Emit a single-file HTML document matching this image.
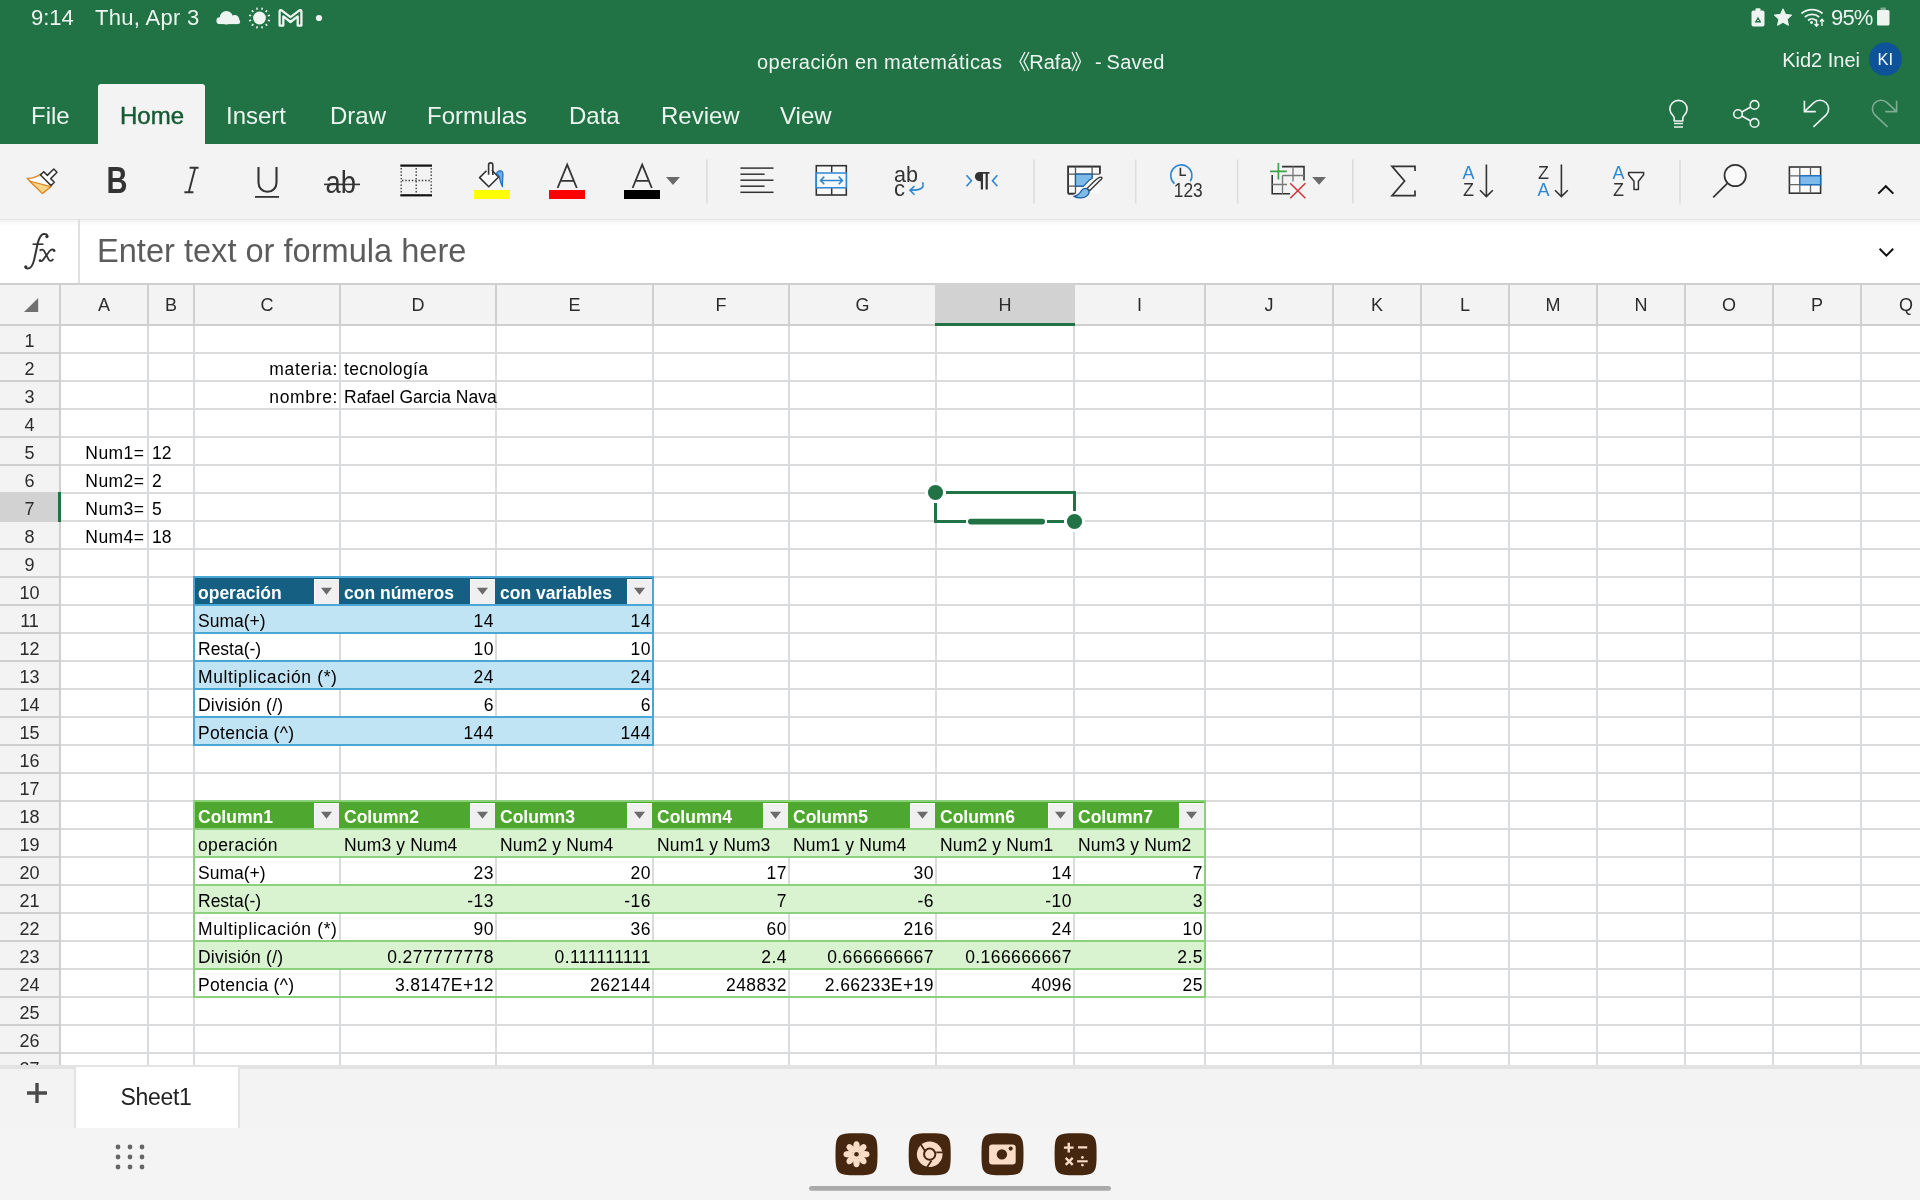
<!DOCTYPE html>
<html><head><meta charset="utf-8"><title>Excel</title>
<style>
html,body{margin:0;padding:0;}
body{width:1920px;height:1200px;overflow:hidden;position:relative;background:#ffffff;font-family:'Liberation Sans',sans-serif;}
#root{position:absolute;left:0;top:0;width:1920px;height:1200px;will-change:transform;}
</style></head><body><div id="root">
<div style="position:absolute;left:0px;top:0px;width:1920px;height:144px;background:#217346;"></div>
<div style="position:absolute;left:31px;top:7.37px;font-size:22px;line-height:22px;color:#eef5f0;font-weight:normal;font-family:'Liberation Sans', sans-serif;white-space:nowrap;">9:14</div>
<div style="position:absolute;left:95px;top:7.37px;font-size:22px;line-height:22px;color:#eef5f0;font-weight:normal;font-family:'Liberation Sans', sans-serif;white-space:nowrap;letter-spacing:0.3px;">Thu, Apr 3</div>
<svg style="position:absolute;left:200px;top:0px;" width="140" height="36" viewBox="200 0 140 36"><circle cx="226.4" cy="17.7" r="6.7" fill="#eef5f0"/><circle cx="234.8" cy="19.6" r="4.5" fill="#eef5f0"/><circle cx="219.8" cy="20.7" r="3.4" fill="#eef5f0"/><circle cx="237.9" cy="21.8" r="2.3" fill="#eef5f0"/><rect x="219.8" y="19" width="18" height="5.1" fill="#eef5f0"/><circle cx="259.5" cy="18" r="6.4" fill="#eef5f0"/><path d="M267.81 20.23 L269.93 20.80" stroke="#eef5f0" stroke-width="1.5"/><path d="M265.58 24.08 L267.14 25.64" stroke="#eef5f0" stroke-width="1.5"/><path d="M261.73 26.31 L262.30 28.43" stroke="#eef5f0" stroke-width="1.5"/><path d="M257.27 26.31 L256.70 28.43" stroke="#eef5f0" stroke-width="1.5"/><path d="M253.42 24.08 L251.86 25.64" stroke="#eef5f0" stroke-width="1.5"/><path d="M251.19 20.23 L249.07 20.80" stroke="#eef5f0" stroke-width="1.5"/><path d="M251.19 15.77 L249.07 15.20" stroke="#eef5f0" stroke-width="1.5"/><path d="M253.42 11.92 L251.86 10.36" stroke="#eef5f0" stroke-width="1.5"/><path d="M257.27 9.69 L256.70 7.57" stroke="#eef5f0" stroke-width="1.5"/><path d="M261.73 9.69 L262.30 7.57" stroke="#eef5f0" stroke-width="1.5"/><path d="M265.58 11.92 L267.14 10.36" stroke="#eef5f0" stroke-width="1.5"/><path d="M267.81 15.77 L269.93 15.20" stroke="#eef5f0" stroke-width="1.5"/><path d="M279.6 25.6 V11.6 q0 -2.2 2 -1.3 L290.5 17.2 L299.4 10.3 q2 -0.9 2 1.3 V25.6 H297.7 V16.4 L290.5 22 L283.3 16.4 V25.6 Z" fill="none" stroke="#eef5f0" stroke-width="2.3" stroke-linejoin="round"/><circle cx="319" cy="18" r="3.1" fill="#eef5f0"/></svg>
<svg style="position:absolute;left:1745px;top:0px;" width="175" height="36" viewBox="1745 0 175 36"><rect x="1751.5" y="10.5" width="13" height="16" rx="2" fill="#eef5f0"/><rect x="1755.5" y="8.2" width="5" height="3" rx="1" fill="#eef5f0"/><path d="M1756 21.5 l2 -3.5 l2 3.5 z M1755 21.8 h6" fill="none" stroke="#217346" stroke-width="1.2"/><path d="M1783 8.8 l2.6 5.6 l6.1 0.7 l-4.5 4.2 l1.2 6 l-5.4 -3 l-5.4 3 l1.2 -6 l-4.5 -4.2 l6.1 -0.7 z" fill="#eef5f0" stroke="#eef5f0" stroke-width="1" stroke-linejoin="round"/><path d="M1801.5 13.5 a16 16 0 0 1 21 0" fill="none" stroke="#eef5f0" stroke-width="1.7"/><path d="M1804.8 17 a11 11 0 0 1 14.4 0" fill="none" stroke="#eef5f0" stroke-width="1.7"/><path d="M1808 20.5 a6 6 0 0 1 8 0" fill="none" stroke="#eef5f0" stroke-width="1.7"/><circle cx="1811.5" cy="22.5" r="1.4" fill="#eef5f0"/><path d="M1816.5 19.5 v6.5 M1814.5 24 l2 2.2 l2 -2.2 M1822 26 v-6.5 M1820 21.5 l2 -2.2 l2 2.2" fill="none" stroke="#eef5f0" stroke-width="1.4"/><rect x="1877" y="10" width="12.5" height="15.5" rx="1.5" fill="#eef5f0"/><rect x="1880.5" y="7.5" width="5.5" height="3" rx="0.8" fill="#eef5f0" opacity="0.45"/></svg>
<div style="position:absolute;left:1831px;top:7.37px;font-size:22px;line-height:22px;color:#eef5f0;font-weight:normal;font-family:'Liberation Sans', sans-serif;white-space:nowrap;letter-spacing:-0.8px;">95%</div>
<svg style="position:absolute;left:1010px;top:45px;" width="80" height="35" viewBox="1010 45 80 35"><path d="M1025 52 L1020 61.5 L1025 71 M1029 52 L1024 61.5 L1029 71" fill="none" stroke="#eef5f0" stroke-width="1.3"/><path d="M1072 52 L1076.5 61.5 L1072 71 M1076 52 L1080.5 61.5 L1076 71" fill="none" stroke="#eef5f0" stroke-width="1.3"/></svg>
<div style="position:absolute;left:757px;top:51.57px;font-size:20px;line-height:20px;color:#eef5f0;font-weight:normal;font-family:'Liberation Sans', sans-serif;white-space:nowrap;letter-spacing:0.45px;">operación en matemáticas</div>
<div style="position:absolute;left:1029.3px;top:51.57px;font-size:20px;line-height:20px;color:#eef5f0;font-weight:normal;font-family:'Liberation Sans', sans-serif;white-space:nowrap;">Rafa</div>
<div style="position:absolute;left:1095px;top:51.57px;font-size:20px;line-height:20px;color:#eef5f0;font-weight:normal;font-family:'Liberation Sans', sans-serif;white-space:nowrap;">-</div>
<div style="position:absolute;left:1106.5px;top:51.57px;font-size:20px;line-height:20px;color:#eef5f0;font-weight:normal;font-family:'Liberation Sans', sans-serif;white-space:nowrap;letter-spacing:0.3px;">Saved</div>
<div style="position:absolute;right:60px;text-align:right;top:50.07px;font-size:20px;line-height:20px;color:#eef5f0;font-weight:normal;font-family:'Liberation Sans', sans-serif;white-space:nowrap;">Kid2 Inei</div>
<svg style="position:absolute;left:1860px;top:35px;" width="50" height="50" viewBox="1860 35 50 50"><circle cx="1885.4" cy="59.2" r="16.6" fill="#0e539a"/></svg>
<div style="position:absolute;left:1285.4px;width:1200px;text-align:center;top:51.03px;font-size:16.5px;line-height:16.5px;color:#f4f8ff;font-weight:normal;font-family:'Liberation Sans', sans-serif;white-space:nowrap;">KI</div>
<div style="position:absolute;left:98px;top:84px;width:107px;height:60px;background:#f3f3f3;border-radius:3px 3px 0 0"></div>
<div style="position:absolute;left:31px;top:103.68px;font-size:24px;line-height:24px;color:#eef5f0;font-weight:normal;font-family:'Liberation Sans', sans-serif;white-space:nowrap;">File</div>
<div style="position:absolute;left:120px;top:103.68px;font-size:24px;line-height:24px;color:#145a32;font-weight:normal;font-family:'Liberation Sans', sans-serif;white-space:nowrap;-webkit-text-stroke:0.45px #145a32;">Home</div>
<div style="position:absolute;left:226px;top:103.68px;font-size:24px;line-height:24px;color:#eef5f0;font-weight:normal;font-family:'Liberation Sans', sans-serif;white-space:nowrap;">Insert</div>
<div style="position:absolute;left:330px;top:103.68px;font-size:24px;line-height:24px;color:#eef5f0;font-weight:normal;font-family:'Liberation Sans', sans-serif;white-space:nowrap;">Draw</div>
<div style="position:absolute;left:427px;top:103.68px;font-size:24px;line-height:24px;color:#eef5f0;font-weight:normal;font-family:'Liberation Sans', sans-serif;white-space:nowrap;">Formulas</div>
<div style="position:absolute;left:569px;top:103.68px;font-size:24px;line-height:24px;color:#eef5f0;font-weight:normal;font-family:'Liberation Sans', sans-serif;white-space:nowrap;">Data</div>
<div style="position:absolute;left:661px;top:103.68px;font-size:24px;line-height:24px;color:#eef5f0;font-weight:normal;font-family:'Liberation Sans', sans-serif;white-space:nowrap;">Review</div>
<div style="position:absolute;left:780px;top:103.68px;font-size:24px;line-height:24px;color:#eef5f0;font-weight:normal;font-family:'Liberation Sans', sans-serif;white-space:nowrap;">View</div>
<svg style="position:absolute;left:1660px;top:90px;" width="250" height="50" viewBox="1660 90 250 50"><path d="M1674.2 121 V118.6 q0 -1.8 -1.4 -3.2 a8.6 8.6 0 1 1 11.4 0 q-1.4 1.4 -1.4 3.2 V121 z" fill="none" stroke="#eef5f0" stroke-width="1.6" stroke-linejoin="round"/><path d="M1674 123.5 h9 M1674 127 h9" stroke="#eef5f0" stroke-width="1.6"/><circle cx="1754.5" cy="104.9" r="4.3" fill="none" stroke="#eef5f0" stroke-width="1.6"/><circle cx="1738" cy="114" r="4.3" fill="none" stroke="#eef5f0" stroke-width="1.6"/><circle cx="1754.5" cy="122.9" r="4.3" fill="none" stroke="#eef5f0" stroke-width="1.6"/><path d="M1741.8 112 L1750.7 107 M1741.8 116 L1750.7 121" stroke="#eef5f0" stroke-width="1.6"/><path d="M1804.4 100.8 V111.6 H1815.8 M1804.6 111.4 L1813.9 102.6 a8.7 8.7 0 0 1 12.3 12.3 L1813.4 126.8" fill="none" stroke="#eef5f0" stroke-width="1.6"/><path d="M1896.6 100.8 V111.6 H1885.2 M1896.4 111.4 L1887.1 102.6 a8.7 8.7 0 0 0 -12.3 12.3 L1887.6 126.8" fill="none" stroke="#eef5f0" stroke-width="1.6" opacity="0.45"/></svg>
<div style="position:absolute;left:0px;top:144px;width:1920px;height:75px;background:#f3f3f3;"></div>
<div style="position:absolute;left:0px;top:219px;width:1920px;height:1px;background:#e4e4e4;"></div>
<div style="position:absolute;left:0;top:220px;width:1920px;height:6px;background:linear-gradient(#f3f3f3,#ffffff)"></div>
<svg style="position:absolute;left:0;top:144px" width="1920" height="76" viewBox="0 144 1920 76"><path d="M40.6 174 C36.5 177.6 31 178.4 27 178.3 L42.4 193.4 L51.2 186.4 Z" fill="#ffffff" stroke="#dd8626" stroke-width="1.3" stroke-linejoin="round"/><path d="M29.6 181 L50.6 186.6 L42.4 193.4 Z" fill="#fcd488" stroke="#dd8626" stroke-width="1.2" stroke-linejoin="round"/><g transform="translate(47.4 178.6) rotate(45)"><path d="M-7.5 -2.3 H-2.3 V-11.3 H2.3 V-2.3 H7.5 V2.3 H-7.5 Z" fill="#fff" stroke="#333" stroke-width="1.5" stroke-linejoin="round"/></g><text x="106.6" y="192.7" font-family="Liberation Sans" font-size="37" font-weight="bold" font-style="normal" fill="#333333" text-anchor="start" textLength="21" lengthAdjust="spacingAndGlyphs">B</text><path d="M189.6 167.8 H198.6 M184.4 192.3 H193.4 M195.2 167.8 L188.8 192.3" fill="none" stroke="#333" stroke-width="1.9"/><path d="M258.5 167 V182.8 a9 9 0 0 0 18 0 V167" fill="none" stroke="#333" stroke-width="2.1"/><rect x="255" y="196" width="24" height="1.8" fill="#333"/><text x="325.5" y="192.7" font-family="Liberation Sans" font-size="31" font-weight="normal" font-style="normal" fill="#333333" text-anchor="start" textLength="30.5" lengthAdjust="spacingAndGlyphs">ab</text><rect x="324" y="183.6" width="36" height="1.6" fill="#333"/><rect x="400.3" y="164.5" width="31.7" height="2.2" fill="#111"/><rect x="400.3" y="194.2" width="31.7" height="2.2" fill="#111"/><path d="M401.2 168 V193.5 M416.2 168 V193.5 M431.2 168 V193.5 M402 180.5 H431" fill="none" stroke="#333" stroke-width="1.3" stroke-dasharray="1.4 1.9"/><rect x="474" y="190" width="36" height="9" fill="#ffff00"/><path d="M486.5 170.8 L479.6 177.6 L488.8 186.8 L498.6 177 L491.8 170.2" fill="#fafafa" stroke="#333" stroke-width="1.6" stroke-linejoin="round"/><path d="M488.6 174.8 V165 a2.1 2.1 0 0 1 4.2 0 V175" fill="none" stroke="#333" stroke-width="1.6"/><path d="M496.5 173.5 C498 170 503 169.5 503 174.5 C503 178 502 183 502.6 187 C500.8 183 499.6 180 499.4 176.6 Z" fill="#6aaeea" stroke="#1f6fc0" stroke-width="1.2"/><path d="M557.6 188 L567.2 164.6 L576.8 188 M560.6 180.8 H573.8" fill="none" stroke="#333" stroke-width="1.8"/><rect x="549" y="190" width="36" height="9" fill="#ff0000"/><path d="M632.6 188 L642.2 164.6 L651.8 188 M635.6 180.8 H648.8" fill="none" stroke="#333" stroke-width="1.8"/><rect x="624" y="190" width="36" height="9" fill="#000000"/><path d="M666 177 H680 L673 185 Z" fill="#6a6a6a"/><rect x="706.0" y="159.5" width="1.6" height="44" fill="#dddddd"/><rect x="1033.2" y="159.5" width="1.6" height="44" fill="#dddddd"/><rect x="1134.9" y="159.5" width="1.6" height="44" fill="#dddddd"/><rect x="1236.8" y="159.5" width="1.6" height="44" fill="#dddddd"/><rect x="1352.0" y="159.5" width="1.6" height="44" fill="#dddddd"/><rect x="1679.2" y="159.5" width="1.6" height="44" fill="#dddddd"/><rect x="740.4" y="167.35" width="33.10000000000002" height="1.5" fill="#333"/><rect x="740.4" y="173.45" width="24.200000000000045" height="1.5" fill="#333"/><rect x="740.4" y="179.45" width="33.10000000000002" height="1.5" fill="#333"/><rect x="740.4" y="185.45" width="24.200000000000045" height="1.5" fill="#333"/><rect x="740.4" y="191.55" width="33.10000000000002" height="1.5" fill="#333"/><rect x="816.3" y="165.7" width="30" height="29.3" fill="#fafafa" stroke="#333" stroke-width="1.6"/><path d="M831.7 165.7 V172.6 M831.7 188 V195" stroke="#333" stroke-width="1.5"/><rect x="816.3" y="173" width="30" height="14.8" fill="#f4f9fd" stroke="#2f86d0" stroke-width="1.5"/><path d="M820.5 180.4 H842.5 M824.3 176.6 L820.5 180.4 L824.3 184.2 M838.7 176.6 L842.5 180.4 L838.7 184.2" fill="none" stroke="#2f86d0" stroke-width="1.5"/><text x="894" y="181.5" font-family="Liberation Sans" font-size="21.5" font-weight="normal" font-style="normal" fill="#333333" text-anchor="start" textLength="24" lengthAdjust="spacingAndGlyphs">ab</text><text x="894" y="196" font-family="Liberation Sans" font-size="21.5" font-weight="normal" font-style="normal" fill="#333333" text-anchor="start" textLength="11" lengthAdjust="spacingAndGlyphs">c</text><path d="M922.6 182.3 C925 189 919 190.3 910.5 190.3 M914.5 186 L910 190.3 L914.5 194.8" fill="none" stroke="#2f86d0" stroke-width="1.6"/><path d="M966.5 175.3 L971.4 180.8 L966.5 186.3 M997.4 175.3 L992.5 180.8 L997.4 186.3" fill="none" stroke="#2f86d0" stroke-width="1.6"/><path d="M985.5 172 H979.5 a4.6 4.6 0 0 0 0 9.2 H980.8 V189.6 H983 V173.8 H985.6 V189.6 H987.8 V173.8 H989.5 V172 Z" fill="#333"/><path d="M1068.2 193.6 V166.6 H1099.8 V173.8 M1068.2 193.6 H1075.4" fill="none" stroke="#333" stroke-width="1.6"/><rect x="1068.9" y="167.3" width="30.2" height="25.6" fill="#fafafa"/><path d="M1068.2 193.6 V166.6 H1099.8 V173.8 M1068.2 193.6 H1075.4" fill="none" stroke="#333" stroke-width="1.6"/><path d="M1075.5 166.6 V193.6 M1092.1 166.6 V178 M1068.2 174.2 H1099.8 M1068.2 186.1 H1084" fill="none" stroke="#555" stroke-width="1.3"/><path d="M1075.5 174.2 H1092.1 V178.4 C1088 180 1086 184 1083.6 186.1 H1075.5 Z" fill="#7fbbea" stroke="#1f5f9f" stroke-width="1.3"/><path d="M1101.8 177.4 C1100.6 176.4 1098 177.8 1094.8 180.8 L1087.2 188.4 L1089.6 190.8 L1097.2 183.2 C1100.4 180 1102.8 178.4 1101.8 177.4 Z M1087.9 189.6 C1085.8 187.6 1082.5 188.4 1081.2 191 C1079.8 193.8 1077.6 195.6 1073.8 196.4 C1078 198.6 1084.4 198.6 1087.4 195.4 C1089.4 193.4 1089.6 191.2 1087.9 189.6 Z" fill="#f3f3f3" stroke="#f3f3f3" stroke-width="3.6" stroke-linejoin="round"/><path d="M1101.8 177.4 C1100.6 176.4 1098 177.8 1094.8 180.8 L1087.2 188.4 L1089.6 190.8 L1097.2 183.2 C1100.4 180 1102.8 178.4 1101.8 177.4 Z" fill="#fafafa" stroke="#333" stroke-width="1.3" stroke-linejoin="round"/><path d="M1087.9 189.6 C1085.8 187.6 1082.5 188.4 1081.2 191 C1079.8 193.8 1077.6 195.6 1073.8 196.4 C1078 198.6 1084.4 198.6 1087.4 195.4 C1089.4 193.4 1089.6 191.2 1087.9 189.6 Z" fill="#7fbbea" stroke="#1f5f9f" stroke-width="1.3" stroke-linejoin="round"/><path d="M1174.5 183.6 A10.6 10.6 0 1 1 1190.3 181.2" fill="none" stroke="#2f86d0" stroke-width="1.6"/><path d="M1180.4 167.8 V175.2 H1186" fill="none" stroke="#333" stroke-width="1.6"/><text x="1173.8" y="197" font-family="Liberation Sans" font-size="19.5" font-weight="normal" font-style="normal" fill="#333333" text-anchor="start" textLength="29" lengthAdjust="spacingAndGlyphs">123</text><path d="M1282 166.6 H1304 V180.5 M1272.2 175 V193.8 H1290" fill="none" stroke="#333" stroke-width="1.6"/><path d="M1293 166.6 V181.5 M1282.5 175.5 H1304 M1282.5 175.5 V193.8 M1272.2 184.5 H1287" fill="none" stroke="#777" stroke-width="1.3"/><path d="M1270 171.3 H1286.9 M1278.4 163 V179.6" stroke="#3fa34d" stroke-width="1.7"/><path d="M1290.2 183.2 L1305.4 198.3 M1305.4 183.2 L1290.2 198.3" stroke="#d13438" stroke-width="1.5"/><path d="M1312.2 177 H1326 L1319.1 184.8 Z" fill="#6a6a6a"/><path d="M1415 171 V166.3 H1392 L1404.6 181 L1392 195.6 H1415 V190.6" fill="none" stroke="#333" stroke-width="1.7" stroke-linejoin="miter"/><text x="1462.6" y="179.4" font-family="Liberation Sans" font-size="17.5" font-weight="normal" font-style="normal" fill="#2f86d0" text-anchor="start" textLength="12" lengthAdjust="spacingAndGlyphs">A</text><text x="1463" y="195.8" font-family="Liberation Sans" font-size="17.5" font-weight="normal" font-style="normal" fill="#333333" text-anchor="start" textLength="11" lengthAdjust="spacingAndGlyphs">Z</text><path d="M1486.4 164.4 V196.2 M1480 190.2 L1486.4 196.6 L1492.8 190.2" fill="none" stroke="#333" stroke-width="1.6"/><text x="1538" y="179.4" font-family="Liberation Sans" font-size="17.5" font-weight="normal" font-style="normal" fill="#333333" text-anchor="start" textLength="11" lengthAdjust="spacingAndGlyphs">Z</text><text x="1537.6" y="195.8" font-family="Liberation Sans" font-size="17.5" font-weight="normal" font-style="normal" fill="#2f86d0" text-anchor="start" textLength="12" lengthAdjust="spacingAndGlyphs">A</text><path d="M1561.4 164.4 V196.2 M1555 190.2 L1561.4 196.6 L1567.8 190.2" fill="none" stroke="#333" stroke-width="1.6"/><text x="1612.6" y="179.4" font-family="Liberation Sans" font-size="17.5" font-weight="normal" font-style="normal" fill="#2f86d0" text-anchor="start" textLength="12" lengthAdjust="spacingAndGlyphs">A</text><text x="1613" y="195.8" font-family="Liberation Sans" font-size="17.5" font-weight="normal" font-style="normal" fill="#333333" text-anchor="start" textLength="11" lengthAdjust="spacingAndGlyphs">Z</text><path d="M1628.6 172.6 H1643.6 V174.8 L1638.4 181.2 V189.4 H1634 V181.2 L1628.6 174.8 Z" fill="#fafafa" stroke="#333" stroke-width="1.5" stroke-linejoin="round"/><circle cx="1735.2" cy="175.5" r="10.7" fill="#fafafa" stroke="#333" stroke-width="1.7"/><path d="M1727.6 183.2 L1713.2 197.4" stroke="#333" stroke-width="1.7"/><rect x="1789.4" y="167" width="31.2" height="26.2" fill="#fafafa" stroke="#333" stroke-width="1.6"/><path d="M1799.8 167 V193.2 M1810.5 167 V193.2 M1789.4 175.8 H1820.6 M1789.4 184.7 H1820.6" stroke="#666" stroke-width="1.3"/><rect x="1799.8" y="175.8" width="20.8" height="8.9" fill="#7fbbea" stroke="#1f6fc0" stroke-width="1.4"/><path d="M1878.3 193.6 L1885.8 186.2 L1893.3 193.6" fill="none" stroke="#111" stroke-width="2"/></svg>
<div style="position:absolute;left:0px;top:226px;width:1920px;height:57px;background:#ffffff;"></div>
<div style="position:absolute;left:78px;top:219px;width:2px;height:64px;background:#e0e0e0;"></div>
<div style="position:absolute;left:0px;top:283px;width:1920px;height:2px;background:#cfcfcf;"></div>
<svg style="position:absolute;left:15px;top:225px;" width="50" height="55" viewBox="15 225 50 55"><path d="M47.6 236.8 C47.4 234.6 45.6 233.6 43.6 234 C40.2 234.8 38.8 238.6 37.6 243.8 L34.2 259.6 C32.8 265.6 30.6 268.8 27.2 268.6 C26.2 268.5 25.4 268 25.3 267.2" fill="none" stroke="#333" stroke-width="2"/><circle cx="46.9" cy="236.6" r="1.6" fill="#333"/><circle cx="25.8" cy="266.8" r="1.6" fill="#333"/><path d="M32.6 244.2 H43.4" stroke="#333" stroke-width="1.6"/><path d="M39.6 250.6 C41.6 249 43.4 249.2 44.4 251.4 L48.6 259.4 C49.6 261.2 51.4 261.4 53.4 259.2" fill="none" stroke="#333" stroke-width="1.8"/><path d="M54.4 250.2 C52.8 249 51.2 249.2 49.6 251 L43.2 259.6 C41.8 261.4 40.6 261.4 39.8 260.4" fill="none" stroke="#333" stroke-width="1.8"/><circle cx="54.2" cy="250.8" r="1.3" fill="#333"/><circle cx="40" cy="260.6" r="1.3" fill="#333"/></svg>
<div style="position:absolute;left:97px;top:235.40px;font-size:32.6px;line-height:32.6px;color:#5c5c5c;font-weight:normal;font-family:'Liberation Sans', sans-serif;white-space:nowrap;">Enter text or formula here</div>
<svg style="position:absolute;left:1870px;top:236px;" width="30" height="30" viewBox="1870 236 30 30"><path d="M1879.6 248.8 L1886.4 255.6 L1893.2 248.8" fill="none" stroke="#111" stroke-width="2"/></svg>
<div style="position:absolute;left:0px;top:285px;width:1920px;height:780px;background:#ffffff;"></div>
<div style="position:absolute;left:0px;top:285px;width:1920px;height:39px;background:#f3f3f3;"></div>
<div style="position:absolute;left:0px;top:285px;width:59px;height:780px;background:#f3f3f3;"></div>
<div style="position:absolute;left:935px;top:283px;width:140px;height:40px;background:#d2d2d2;"></div>
<div style="position:absolute;left:0px;top:492px;width:58px;height:30px;background:#d2d2d2;"></div>
<div style="position:absolute;left:0px;top:324px;width:1920px;height:2px;background:#dadbdc;"></div>
<div style="position:absolute;left:0px;top:352px;width:1920px;height:2px;background:#dadbdc;"></div>
<div style="position:absolute;left:0px;top:380px;width:1920px;height:2px;background:#dadbdc;"></div>
<div style="position:absolute;left:0px;top:408px;width:1920px;height:2px;background:#dadbdc;"></div>
<div style="position:absolute;left:0px;top:436px;width:1920px;height:2px;background:#dadbdc;"></div>
<div style="position:absolute;left:0px;top:464px;width:1920px;height:2px;background:#dadbdc;"></div>
<div style="position:absolute;left:0px;top:492px;width:1920px;height:2px;background:#dadbdc;"></div>
<div style="position:absolute;left:0px;top:520px;width:1920px;height:2px;background:#dadbdc;"></div>
<div style="position:absolute;left:0px;top:548px;width:1920px;height:2px;background:#dadbdc;"></div>
<div style="position:absolute;left:0px;top:576px;width:1920px;height:2px;background:#dadbdc;"></div>
<div style="position:absolute;left:0px;top:604px;width:1920px;height:2px;background:#dadbdc;"></div>
<div style="position:absolute;left:0px;top:632px;width:1920px;height:2px;background:#dadbdc;"></div>
<div style="position:absolute;left:0px;top:660px;width:1920px;height:2px;background:#dadbdc;"></div>
<div style="position:absolute;left:0px;top:688px;width:1920px;height:2px;background:#dadbdc;"></div>
<div style="position:absolute;left:0px;top:716px;width:1920px;height:2px;background:#dadbdc;"></div>
<div style="position:absolute;left:0px;top:744px;width:1920px;height:2px;background:#dadbdc;"></div>
<div style="position:absolute;left:0px;top:772px;width:1920px;height:2px;background:#dadbdc;"></div>
<div style="position:absolute;left:0px;top:800px;width:1920px;height:2px;background:#dadbdc;"></div>
<div style="position:absolute;left:0px;top:828px;width:1920px;height:2px;background:#dadbdc;"></div>
<div style="position:absolute;left:0px;top:856px;width:1920px;height:2px;background:#dadbdc;"></div>
<div style="position:absolute;left:0px;top:884px;width:1920px;height:2px;background:#dadbdc;"></div>
<div style="position:absolute;left:0px;top:912px;width:1920px;height:2px;background:#dadbdc;"></div>
<div style="position:absolute;left:0px;top:940px;width:1920px;height:2px;background:#dadbdc;"></div>
<div style="position:absolute;left:0px;top:968px;width:1920px;height:2px;background:#dadbdc;"></div>
<div style="position:absolute;left:0px;top:996px;width:1920px;height:2px;background:#dadbdc;"></div>
<div style="position:absolute;left:0px;top:1024px;width:1920px;height:2px;background:#dadbdc;"></div>
<div style="position:absolute;left:0px;top:1052px;width:1920px;height:2px;background:#dadbdc;"></div>
<div style="position:absolute;left:59px;top:285px;width:2px;height:780px;background:#dadbdc;"></div>
<div style="position:absolute;left:147px;top:285px;width:2px;height:780px;background:#dadbdc;"></div>
<div style="position:absolute;left:193px;top:285px;width:2px;height:780px;background:#dadbdc;"></div>
<div style="position:absolute;left:339px;top:285px;width:2px;height:780px;background:#dadbdc;"></div>
<div style="position:absolute;left:495px;top:285px;width:2px;height:780px;background:#dadbdc;"></div>
<div style="position:absolute;left:652px;top:285px;width:2px;height:780px;background:#dadbdc;"></div>
<div style="position:absolute;left:788px;top:285px;width:2px;height:780px;background:#dadbdc;"></div>
<div style="position:absolute;left:935px;top:285px;width:2px;height:780px;background:#dadbdc;"></div>
<div style="position:absolute;left:1073px;top:285px;width:2px;height:780px;background:#dadbdc;"></div>
<div style="position:absolute;left:1204px;top:285px;width:2px;height:780px;background:#dadbdc;"></div>
<div style="position:absolute;left:1332px;top:285px;width:2px;height:780px;background:#dadbdc;"></div>
<div style="position:absolute;left:1420px;top:285px;width:2px;height:780px;background:#dadbdc;"></div>
<div style="position:absolute;left:1508px;top:285px;width:2px;height:780px;background:#dadbdc;"></div>
<div style="position:absolute;left:1596px;top:285px;width:2px;height:780px;background:#dadbdc;"></div>
<div style="position:absolute;left:1684px;top:285px;width:2px;height:780px;background:#dadbdc;"></div>
<div style="position:absolute;left:1772px;top:285px;width:2px;height:780px;background:#dadbdc;"></div>
<div style="position:absolute;left:1860px;top:285px;width:2px;height:780px;background:#dadbdc;"></div>
<div style="position:absolute;left:59px;top:285px;width:2px;height:39px;background:#cfcfcf;"></div>
<div style="position:absolute;left:147px;top:285px;width:2px;height:39px;background:#cfcfcf;"></div>
<div style="position:absolute;left:193px;top:285px;width:2px;height:39px;background:#cfcfcf;"></div>
<div style="position:absolute;left:339px;top:285px;width:2px;height:39px;background:#cfcfcf;"></div>
<div style="position:absolute;left:495px;top:285px;width:2px;height:39px;background:#cfcfcf;"></div>
<div style="position:absolute;left:652px;top:285px;width:2px;height:39px;background:#cfcfcf;"></div>
<div style="position:absolute;left:788px;top:285px;width:2px;height:39px;background:#cfcfcf;"></div>
<div style="position:absolute;left:935px;top:285px;width:2px;height:39px;background:#cfcfcf;"></div>
<div style="position:absolute;left:1073px;top:285px;width:2px;height:39px;background:#cfcfcf;"></div>
<div style="position:absolute;left:1204px;top:285px;width:2px;height:39px;background:#cfcfcf;"></div>
<div style="position:absolute;left:1332px;top:285px;width:2px;height:39px;background:#cfcfcf;"></div>
<div style="position:absolute;left:1420px;top:285px;width:2px;height:39px;background:#cfcfcf;"></div>
<div style="position:absolute;left:1508px;top:285px;width:2px;height:39px;background:#cfcfcf;"></div>
<div style="position:absolute;left:1596px;top:285px;width:2px;height:39px;background:#cfcfcf;"></div>
<div style="position:absolute;left:1684px;top:285px;width:2px;height:39px;background:#cfcfcf;"></div>
<div style="position:absolute;left:1772px;top:285px;width:2px;height:39px;background:#cfcfcf;"></div>
<div style="position:absolute;left:1860px;top:285px;width:2px;height:39px;background:#cfcfcf;"></div>
<div style="position:absolute;left:0px;top:324px;width:1920px;height:2px;background:#cfcfcf;"></div>
<div style="position:absolute;left:0px;top:352px;width:59px;height:2px;background:#cfcfcf;"></div>
<div style="position:absolute;left:0px;top:380px;width:59px;height:2px;background:#cfcfcf;"></div>
<div style="position:absolute;left:0px;top:408px;width:59px;height:2px;background:#cfcfcf;"></div>
<div style="position:absolute;left:0px;top:436px;width:59px;height:2px;background:#cfcfcf;"></div>
<div style="position:absolute;left:0px;top:464px;width:59px;height:2px;background:#cfcfcf;"></div>
<div style="position:absolute;left:0px;top:492px;width:59px;height:2px;background:#cfcfcf;"></div>
<div style="position:absolute;left:0px;top:520px;width:59px;height:2px;background:#cfcfcf;"></div>
<div style="position:absolute;left:0px;top:548px;width:59px;height:2px;background:#cfcfcf;"></div>
<div style="position:absolute;left:0px;top:576px;width:59px;height:2px;background:#cfcfcf;"></div>
<div style="position:absolute;left:0px;top:604px;width:59px;height:2px;background:#cfcfcf;"></div>
<div style="position:absolute;left:0px;top:632px;width:59px;height:2px;background:#cfcfcf;"></div>
<div style="position:absolute;left:0px;top:660px;width:59px;height:2px;background:#cfcfcf;"></div>
<div style="position:absolute;left:0px;top:688px;width:59px;height:2px;background:#cfcfcf;"></div>
<div style="position:absolute;left:0px;top:716px;width:59px;height:2px;background:#cfcfcf;"></div>
<div style="position:absolute;left:0px;top:744px;width:59px;height:2px;background:#cfcfcf;"></div>
<div style="position:absolute;left:0px;top:772px;width:59px;height:2px;background:#cfcfcf;"></div>
<div style="position:absolute;left:0px;top:800px;width:59px;height:2px;background:#cfcfcf;"></div>
<div style="position:absolute;left:0px;top:828px;width:59px;height:2px;background:#cfcfcf;"></div>
<div style="position:absolute;left:0px;top:856px;width:59px;height:2px;background:#cfcfcf;"></div>
<div style="position:absolute;left:0px;top:884px;width:59px;height:2px;background:#cfcfcf;"></div>
<div style="position:absolute;left:0px;top:912px;width:59px;height:2px;background:#cfcfcf;"></div>
<div style="position:absolute;left:0px;top:940px;width:59px;height:2px;background:#cfcfcf;"></div>
<div style="position:absolute;left:0px;top:968px;width:59px;height:2px;background:#cfcfcf;"></div>
<div style="position:absolute;left:0px;top:996px;width:59px;height:2px;background:#cfcfcf;"></div>
<div style="position:absolute;left:0px;top:1024px;width:59px;height:2px;background:#cfcfcf;"></div>
<div style="position:absolute;left:0px;top:1052px;width:59px;height:2px;background:#cfcfcf;"></div>
<div style="position:absolute;left:59px;top:285px;width:2px;height:780px;background:#cfcfcf;"></div>
<div style="position:absolute;left:935px;top:283px;width:140px;height:40px;background:#d2d2d2;"></div>
<div style="position:absolute;left:936px;top:283px;width:138px;height:2px;background:#d2d2d2;"></div>
<div style="position:absolute;left:935px;top:323px;width:140px;height:3px;background:#217346;"></div>
<div style="position:absolute;left:0px;top:492px;width:58px;height:30px;background:#d2d2d2;"></div>
<div style="position:absolute;left:58px;top:492px;width:3px;height:30px;background:#217346;"></div>
<svg style="position:absolute;left:20px;top:292px" width="25" height="25" viewBox="20 292 25 25"><path d="M38.2 298 V312 H24 Z" fill="#707070"/></svg>
<div style="position:absolute;left:-496.0px;width:1200px;text-align:center;top:295.76px;font-size:18px;line-height:18px;color:#2b2b2b;font-weight:normal;font-family:'Liberation Sans', sans-serif;white-space:nowrap;">A</div>
<div style="position:absolute;left:-429.0px;width:1200px;text-align:center;top:295.76px;font-size:18px;line-height:18px;color:#2b2b2b;font-weight:normal;font-family:'Liberation Sans', sans-serif;white-space:nowrap;">B</div>
<div style="position:absolute;left:-333.0px;width:1200px;text-align:center;top:295.76px;font-size:18px;line-height:18px;color:#2b2b2b;font-weight:normal;font-family:'Liberation Sans', sans-serif;white-space:nowrap;">C</div>
<div style="position:absolute;left:-182.0px;width:1200px;text-align:center;top:295.76px;font-size:18px;line-height:18px;color:#2b2b2b;font-weight:normal;font-family:'Liberation Sans', sans-serif;white-space:nowrap;">D</div>
<div style="position:absolute;left:-25.5px;width:1200px;text-align:center;top:295.76px;font-size:18px;line-height:18px;color:#2b2b2b;font-weight:normal;font-family:'Liberation Sans', sans-serif;white-space:nowrap;">E</div>
<div style="position:absolute;left:121.0px;width:1200px;text-align:center;top:295.76px;font-size:18px;line-height:18px;color:#2b2b2b;font-weight:normal;font-family:'Liberation Sans', sans-serif;white-space:nowrap;">F</div>
<div style="position:absolute;left:262.5px;width:1200px;text-align:center;top:295.76px;font-size:18px;line-height:18px;color:#2b2b2b;font-weight:normal;font-family:'Liberation Sans', sans-serif;white-space:nowrap;">G</div>
<div style="position:absolute;left:405.0px;width:1200px;text-align:center;top:295.76px;font-size:18px;line-height:18px;color:#2b2b2b;font-weight:normal;font-family:'Liberation Sans', sans-serif;white-space:nowrap;">H</div>
<div style="position:absolute;left:539.5px;width:1200px;text-align:center;top:295.76px;font-size:18px;line-height:18px;color:#2b2b2b;font-weight:normal;font-family:'Liberation Sans', sans-serif;white-space:nowrap;">I</div>
<div style="position:absolute;left:669.0px;width:1200px;text-align:center;top:295.76px;font-size:18px;line-height:18px;color:#2b2b2b;font-weight:normal;font-family:'Liberation Sans', sans-serif;white-space:nowrap;">J</div>
<div style="position:absolute;left:777.0px;width:1200px;text-align:center;top:295.76px;font-size:18px;line-height:18px;color:#2b2b2b;font-weight:normal;font-family:'Liberation Sans', sans-serif;white-space:nowrap;">K</div>
<div style="position:absolute;left:865.0px;width:1200px;text-align:center;top:295.76px;font-size:18px;line-height:18px;color:#2b2b2b;font-weight:normal;font-family:'Liberation Sans', sans-serif;white-space:nowrap;">L</div>
<div style="position:absolute;left:953.0px;width:1200px;text-align:center;top:295.76px;font-size:18px;line-height:18px;color:#2b2b2b;font-weight:normal;font-family:'Liberation Sans', sans-serif;white-space:nowrap;">M</div>
<div style="position:absolute;left:1041.0px;width:1200px;text-align:center;top:295.76px;font-size:18px;line-height:18px;color:#2b2b2b;font-weight:normal;font-family:'Liberation Sans', sans-serif;white-space:nowrap;">N</div>
<div style="position:absolute;left:1129.0px;width:1200px;text-align:center;top:295.76px;font-size:18px;line-height:18px;color:#2b2b2b;font-weight:normal;font-family:'Liberation Sans', sans-serif;white-space:nowrap;">O</div>
<div style="position:absolute;left:1217.0px;width:1200px;text-align:center;top:295.76px;font-size:18px;line-height:18px;color:#2b2b2b;font-weight:normal;font-family:'Liberation Sans', sans-serif;white-space:nowrap;">P</div>
<div style="position:absolute;left:1306.0px;width:1200px;text-align:center;top:295.76px;font-size:18px;line-height:18px;color:#2b2b2b;font-weight:normal;font-family:'Liberation Sans', sans-serif;white-space:nowrap;">Q</div>
<div style="position:absolute;left:-570.5px;width:1200px;text-align:center;top:331.76px;font-size:18px;line-height:18px;color:#2b2b2b;font-weight:normal;font-family:'Liberation Sans', sans-serif;white-space:nowrap;">1</div>
<div style="position:absolute;left:-570.5px;width:1200px;text-align:center;top:359.76px;font-size:18px;line-height:18px;color:#2b2b2b;font-weight:normal;font-family:'Liberation Sans', sans-serif;white-space:nowrap;">2</div>
<div style="position:absolute;left:-570.5px;width:1200px;text-align:center;top:387.76px;font-size:18px;line-height:18px;color:#2b2b2b;font-weight:normal;font-family:'Liberation Sans', sans-serif;white-space:nowrap;">3</div>
<div style="position:absolute;left:-570.5px;width:1200px;text-align:center;top:415.76px;font-size:18px;line-height:18px;color:#2b2b2b;font-weight:normal;font-family:'Liberation Sans', sans-serif;white-space:nowrap;">4</div>
<div style="position:absolute;left:-570.5px;width:1200px;text-align:center;top:443.76px;font-size:18px;line-height:18px;color:#2b2b2b;font-weight:normal;font-family:'Liberation Sans', sans-serif;white-space:nowrap;">5</div>
<div style="position:absolute;left:-570.5px;width:1200px;text-align:center;top:471.76px;font-size:18px;line-height:18px;color:#2b2b2b;font-weight:normal;font-family:'Liberation Sans', sans-serif;white-space:nowrap;">6</div>
<div style="position:absolute;left:-570.5px;width:1200px;text-align:center;top:499.76px;font-size:18px;line-height:18px;color:#2b2b2b;font-weight:normal;font-family:'Liberation Sans', sans-serif;white-space:nowrap;">7</div>
<div style="position:absolute;left:-570.5px;width:1200px;text-align:center;top:527.76px;font-size:18px;line-height:18px;color:#2b2b2b;font-weight:normal;font-family:'Liberation Sans', sans-serif;white-space:nowrap;">8</div>
<div style="position:absolute;left:-570.5px;width:1200px;text-align:center;top:555.76px;font-size:18px;line-height:18px;color:#2b2b2b;font-weight:normal;font-family:'Liberation Sans', sans-serif;white-space:nowrap;">9</div>
<div style="position:absolute;left:-570.5px;width:1200px;text-align:center;top:583.76px;font-size:18px;line-height:18px;color:#2b2b2b;font-weight:normal;font-family:'Liberation Sans', sans-serif;white-space:nowrap;">10</div>
<div style="position:absolute;left:-570.5px;width:1200px;text-align:center;top:611.76px;font-size:18px;line-height:18px;color:#2b2b2b;font-weight:normal;font-family:'Liberation Sans', sans-serif;white-space:nowrap;">11</div>
<div style="position:absolute;left:-570.5px;width:1200px;text-align:center;top:639.76px;font-size:18px;line-height:18px;color:#2b2b2b;font-weight:normal;font-family:'Liberation Sans', sans-serif;white-space:nowrap;">12</div>
<div style="position:absolute;left:-570.5px;width:1200px;text-align:center;top:667.76px;font-size:18px;line-height:18px;color:#2b2b2b;font-weight:normal;font-family:'Liberation Sans', sans-serif;white-space:nowrap;">13</div>
<div style="position:absolute;left:-570.5px;width:1200px;text-align:center;top:695.76px;font-size:18px;line-height:18px;color:#2b2b2b;font-weight:normal;font-family:'Liberation Sans', sans-serif;white-space:nowrap;">14</div>
<div style="position:absolute;left:-570.5px;width:1200px;text-align:center;top:723.76px;font-size:18px;line-height:18px;color:#2b2b2b;font-weight:normal;font-family:'Liberation Sans', sans-serif;white-space:nowrap;">15</div>
<div style="position:absolute;left:-570.5px;width:1200px;text-align:center;top:751.76px;font-size:18px;line-height:18px;color:#2b2b2b;font-weight:normal;font-family:'Liberation Sans', sans-serif;white-space:nowrap;">16</div>
<div style="position:absolute;left:-570.5px;width:1200px;text-align:center;top:779.76px;font-size:18px;line-height:18px;color:#2b2b2b;font-weight:normal;font-family:'Liberation Sans', sans-serif;white-space:nowrap;">17</div>
<div style="position:absolute;left:-570.5px;width:1200px;text-align:center;top:807.76px;font-size:18px;line-height:18px;color:#2b2b2b;font-weight:normal;font-family:'Liberation Sans', sans-serif;white-space:nowrap;">18</div>
<div style="position:absolute;left:-570.5px;width:1200px;text-align:center;top:835.76px;font-size:18px;line-height:18px;color:#2b2b2b;font-weight:normal;font-family:'Liberation Sans', sans-serif;white-space:nowrap;">19</div>
<div style="position:absolute;left:-570.5px;width:1200px;text-align:center;top:863.76px;font-size:18px;line-height:18px;color:#2b2b2b;font-weight:normal;font-family:'Liberation Sans', sans-serif;white-space:nowrap;">20</div>
<div style="position:absolute;left:-570.5px;width:1200px;text-align:center;top:891.76px;font-size:18px;line-height:18px;color:#2b2b2b;font-weight:normal;font-family:'Liberation Sans', sans-serif;white-space:nowrap;">21</div>
<div style="position:absolute;left:-570.5px;width:1200px;text-align:center;top:919.76px;font-size:18px;line-height:18px;color:#2b2b2b;font-weight:normal;font-family:'Liberation Sans', sans-serif;white-space:nowrap;">22</div>
<div style="position:absolute;left:-570.5px;width:1200px;text-align:center;top:947.76px;font-size:18px;line-height:18px;color:#2b2b2b;font-weight:normal;font-family:'Liberation Sans', sans-serif;white-space:nowrap;">23</div>
<div style="position:absolute;left:-570.5px;width:1200px;text-align:center;top:975.76px;font-size:18px;line-height:18px;color:#2b2b2b;font-weight:normal;font-family:'Liberation Sans', sans-serif;white-space:nowrap;">24</div>
<div style="position:absolute;left:-570.5px;width:1200px;text-align:center;top:1003.76px;font-size:18px;line-height:18px;color:#2b2b2b;font-weight:normal;font-family:'Liberation Sans', sans-serif;white-space:nowrap;">25</div>
<div style="position:absolute;left:-570.5px;width:1200px;text-align:center;top:1031.76px;font-size:18px;line-height:18px;color:#2b2b2b;font-weight:normal;font-family:'Liberation Sans', sans-serif;white-space:nowrap;">26</div>
<div style="position:absolute;left:-570.5px;width:1200px;text-align:center;top:1059.76px;font-size:18px;line-height:18px;color:#2b2b2b;font-weight:normal;font-family:'Liberation Sans', sans-serif;white-space:nowrap;">27</div>
<div style="position:absolute;right:1581.9px;text-align:right;top:361.18px;font-size:17.5px;line-height:17.5px;color:#000;font-weight:normal;font-family:'Liberation Sans', sans-serif;white-space:nowrap;letter-spacing:0.7px;">materia:</div>
<div style="position:absolute;left:344px;top:361.18px;font-size:17.5px;line-height:17.5px;color:#000;font-weight:normal;font-family:'Liberation Sans', sans-serif;white-space:nowrap;letter-spacing:0.35px;">tecnología</div>
<div style="position:absolute;right:1581.95px;text-align:right;top:389.18px;font-size:17.5px;line-height:17.5px;color:#000;font-weight:normal;font-family:'Liberation Sans', sans-serif;white-space:nowrap;letter-spacing:0.65px;">nombre:</div>
<div style="position:absolute;left:344px;top:389.18px;font-size:17.5px;line-height:17.5px;color:#000;font-weight:normal;font-family:'Liberation Sans', sans-serif;white-space:nowrap;">Rafael Garcia Nava</div>
<div style="position:absolute;right:1775.55px;text-align:right;top:445.18px;font-size:17.5px;line-height:17.5px;color:#000;font-weight:normal;font-family:'Liberation Sans', sans-serif;white-space:nowrap;letter-spacing:0.45px;">Num1=</div>
<div style="position:absolute;left:152px;top:445.18px;font-size:17.5px;line-height:17.5px;color:#000;font-weight:normal;font-family:'Liberation Sans', sans-serif;white-space:nowrap;letter-spacing:0.1px;">12</div>
<div style="position:absolute;right:1775.55px;text-align:right;top:473.18px;font-size:17.5px;line-height:17.5px;color:#000;font-weight:normal;font-family:'Liberation Sans', sans-serif;white-space:nowrap;letter-spacing:0.45px;">Num2=</div>
<div style="position:absolute;left:152px;top:473.18px;font-size:17.5px;line-height:17.5px;color:#000;font-weight:normal;font-family:'Liberation Sans', sans-serif;white-space:nowrap;letter-spacing:0.1px;">2</div>
<div style="position:absolute;right:1775.55px;text-align:right;top:501.18px;font-size:17.5px;line-height:17.5px;color:#000;font-weight:normal;font-family:'Liberation Sans', sans-serif;white-space:nowrap;letter-spacing:0.45px;">Num3=</div>
<div style="position:absolute;left:152px;top:501.18px;font-size:17.5px;line-height:17.5px;color:#000;font-weight:normal;font-family:'Liberation Sans', sans-serif;white-space:nowrap;letter-spacing:0.1px;">5</div>
<div style="position:absolute;right:1775.55px;text-align:right;top:529.18px;font-size:17.5px;line-height:17.5px;color:#000;font-weight:normal;font-family:'Liberation Sans', sans-serif;white-space:nowrap;letter-spacing:0.45px;">Num4=</div>
<div style="position:absolute;left:152px;top:529.18px;font-size:17.5px;line-height:17.5px;color:#000;font-weight:normal;font-family:'Liberation Sans', sans-serif;white-space:nowrap;letter-spacing:0.1px;">18</div>
<div style="position:absolute;left:195px;top:578px;width:457px;height:26px;background:#156082;"></div>
<div style="position:absolute;left:195px;top:606px;width:457px;height:26px;background:#c1e4f5;"></div>
<div style="position:absolute;left:195px;top:662px;width:457px;height:26px;background:#c1e4f5;"></div>
<div style="position:absolute;left:195px;top:718px;width:457px;height:26px;background:#c1e4f5;"></div>
<div style="position:absolute;left:193px;top:576px;width:461px;height:2px;background:#49a6d5;"></div>
<div style="position:absolute;left:193px;top:604px;width:461px;height:2px;background:#49a6d5;"></div>
<div style="position:absolute;left:193px;top:632px;width:461px;height:2px;background:#49a6d5;"></div>
<div style="position:absolute;left:193px;top:660px;width:461px;height:2px;background:#49a6d5;"></div>
<div style="position:absolute;left:193px;top:688px;width:461px;height:2px;background:#49a6d5;"></div>
<div style="position:absolute;left:193px;top:716px;width:461px;height:2px;background:#49a6d5;"></div>
<div style="position:absolute;left:193px;top:744px;width:461px;height:2px;background:#49a6d5;"></div>
<div style="position:absolute;left:193px;top:576px;width:2px;height:170px;background:#49a6d5;"></div>
<div style="position:absolute;left:652px;top:576px;width:2px;height:170px;background:#49a6d5;"></div>
<div style="position:absolute;left:198px;top:585.18px;font-size:17.5px;line-height:17.5px;color:#ffffff;font-weight:bold;font-family:'Liberation Sans', sans-serif;white-space:nowrap;">operación</div>
<div style="position:absolute;left:314px;top:579px;width:25px;height:25px;background:#f0f0f0;box-shadow:inset 1px 1px 0 #fbfbfb"></div>
<svg style="position:absolute;left:314px;top:579px" width="25" height="25" viewBox="314 579 25 25"><path d="M321.0 587.7 H332.0 L326.5 594.7 Z" fill="#6b6b6b"/></svg>
<div style="position:absolute;left:344px;top:585.18px;font-size:17.5px;line-height:17.5px;color:#ffffff;font-weight:bold;font-family:'Liberation Sans', sans-serif;white-space:nowrap;">con números</div>
<div style="position:absolute;left:470px;top:579px;width:25px;height:25px;background:#f0f0f0;box-shadow:inset 1px 1px 0 #fbfbfb"></div>
<svg style="position:absolute;left:470px;top:579px" width="25" height="25" viewBox="470 579 25 25"><path d="M477.0 587.7 H488.0 L482.5 594.7 Z" fill="#6b6b6b"/></svg>
<div style="position:absolute;left:500px;top:585.18px;font-size:17.5px;line-height:17.5px;color:#ffffff;font-weight:bold;font-family:'Liberation Sans', sans-serif;white-space:nowrap;">con variables</div>
<div style="position:absolute;left:627px;top:579px;width:25px;height:25px;background:#f0f0f0;box-shadow:inset 1px 1px 0 #fbfbfb"></div>
<svg style="position:absolute;left:627px;top:579px" width="25" height="25" viewBox="627 579 25 25"><path d="M634.0 587.7 H645.0 L639.5 594.7 Z" fill="#6b6b6b"/></svg>
<div style="position:absolute;left:198px;top:613.18px;font-size:17.5px;line-height:17.5px;color:#000;font-weight:normal;font-family:'Liberation Sans', sans-serif;white-space:nowrap;">Suma(+)</div>
<div style="position:absolute;right:1426.2px;text-align:right;top:613.18px;font-size:17.5px;line-height:17.5px;color:#000;font-weight:normal;font-family:'Liberation Sans', sans-serif;white-space:nowrap;letter-spacing:0.4px;">14</div>
<div style="position:absolute;right:1269.2px;text-align:right;top:613.18px;font-size:17.5px;line-height:17.5px;color:#000;font-weight:normal;font-family:'Liberation Sans', sans-serif;white-space:nowrap;letter-spacing:0.4px;">14</div>
<div style="position:absolute;left:198px;top:641.18px;font-size:17.5px;line-height:17.5px;color:#000;font-weight:normal;font-family:'Liberation Sans', sans-serif;white-space:nowrap;">Resta(-)</div>
<div style="position:absolute;right:1426.2px;text-align:right;top:641.18px;font-size:17.5px;line-height:17.5px;color:#000;font-weight:normal;font-family:'Liberation Sans', sans-serif;white-space:nowrap;letter-spacing:0.4px;">10</div>
<div style="position:absolute;right:1269.2px;text-align:right;top:641.18px;font-size:17.5px;line-height:17.5px;color:#000;font-weight:normal;font-family:'Liberation Sans', sans-serif;white-space:nowrap;letter-spacing:0.4px;">10</div>
<div style="position:absolute;left:198px;top:669.18px;font-size:17.5px;line-height:17.5px;color:#000;font-weight:normal;font-family:'Liberation Sans', sans-serif;white-space:nowrap;letter-spacing:0.62px;">Multiplicación (*)</div>
<div style="position:absolute;right:1426.2px;text-align:right;top:669.18px;font-size:17.5px;line-height:17.5px;color:#000;font-weight:normal;font-family:'Liberation Sans', sans-serif;white-space:nowrap;letter-spacing:0.4px;">24</div>
<div style="position:absolute;right:1269.2px;text-align:right;top:669.18px;font-size:17.5px;line-height:17.5px;color:#000;font-weight:normal;font-family:'Liberation Sans', sans-serif;white-space:nowrap;letter-spacing:0.4px;">24</div>
<div style="position:absolute;left:198px;top:697.18px;font-size:17.5px;line-height:17.5px;color:#000;font-weight:normal;font-family:'Liberation Sans', sans-serif;white-space:nowrap;letter-spacing:0.22px;">División (/)</div>
<div style="position:absolute;right:1426.2px;text-align:right;top:697.18px;font-size:17.5px;line-height:17.5px;color:#000;font-weight:normal;font-family:'Liberation Sans', sans-serif;white-space:nowrap;letter-spacing:0.4px;">6</div>
<div style="position:absolute;right:1269.2px;text-align:right;top:697.18px;font-size:17.5px;line-height:17.5px;color:#000;font-weight:normal;font-family:'Liberation Sans', sans-serif;white-space:nowrap;letter-spacing:0.4px;">6</div>
<div style="position:absolute;left:198px;top:725.18px;font-size:17.5px;line-height:17.5px;color:#000;font-weight:normal;font-family:'Liberation Sans', sans-serif;white-space:nowrap;letter-spacing:0.29px;">Potencia (^)</div>
<div style="position:absolute;right:1426.2px;text-align:right;top:725.18px;font-size:17.5px;line-height:17.5px;color:#000;font-weight:normal;font-family:'Liberation Sans', sans-serif;white-space:nowrap;letter-spacing:0.4px;">144</div>
<div style="position:absolute;right:1269.2px;text-align:right;top:725.18px;font-size:17.5px;line-height:17.5px;color:#000;font-weight:normal;font-family:'Liberation Sans', sans-serif;white-space:nowrap;letter-spacing:0.4px;">144</div>
<div style="position:absolute;left:195px;top:802px;width:1009px;height:26px;background:#4ea72e;"></div>
<div style="position:absolute;left:195px;top:830px;width:1009px;height:26px;background:#d9f2d0;"></div>
<div style="position:absolute;left:195px;top:886px;width:1009px;height:26px;background:#d9f2d0;"></div>
<div style="position:absolute;left:195px;top:942px;width:1009px;height:26px;background:#d9f2d0;"></div>
<div style="position:absolute;left:193px;top:800px;width:1013px;height:2px;background:#8bd07a;"></div>
<div style="position:absolute;left:193px;top:828px;width:1013px;height:2px;background:#8bd07a;"></div>
<div style="position:absolute;left:193px;top:856px;width:1013px;height:2px;background:#8bd07a;"></div>
<div style="position:absolute;left:193px;top:884px;width:1013px;height:2px;background:#8bd07a;"></div>
<div style="position:absolute;left:193px;top:912px;width:1013px;height:2px;background:#8bd07a;"></div>
<div style="position:absolute;left:193px;top:940px;width:1013px;height:2px;background:#8bd07a;"></div>
<div style="position:absolute;left:193px;top:968px;width:1013px;height:2px;background:#8bd07a;"></div>
<div style="position:absolute;left:193px;top:996px;width:1013px;height:2px;background:#8bd07a;"></div>
<div style="position:absolute;left:193px;top:800px;width:2px;height:198px;background:#8bd07a;"></div>
<div style="position:absolute;left:1204px;top:800px;width:2px;height:198px;background:#8bd07a;"></div>
<div style="position:absolute;left:198px;top:809.18px;font-size:17.5px;line-height:17.5px;color:#ffffff;font-weight:bold;font-family:'Liberation Sans', sans-serif;white-space:nowrap;">Column1</div>
<div style="position:absolute;left:314px;top:803px;width:25px;height:25px;background:#f0f0f0;box-shadow:inset 1px 1px 0 #fbfbfb"></div>
<svg style="position:absolute;left:314px;top:803px" width="25" height="25" viewBox="314 803 25 25"><path d="M321.0 811.7 H332.0 L326.5 818.7 Z" fill="#6b6b6b"/></svg>
<div style="position:absolute;left:344px;top:809.18px;font-size:17.5px;line-height:17.5px;color:#ffffff;font-weight:bold;font-family:'Liberation Sans', sans-serif;white-space:nowrap;">Column2</div>
<div style="position:absolute;left:470px;top:803px;width:25px;height:25px;background:#f0f0f0;box-shadow:inset 1px 1px 0 #fbfbfb"></div>
<svg style="position:absolute;left:470px;top:803px" width="25" height="25" viewBox="470 803 25 25"><path d="M477.0 811.7 H488.0 L482.5 818.7 Z" fill="#6b6b6b"/></svg>
<div style="position:absolute;left:500px;top:809.18px;font-size:17.5px;line-height:17.5px;color:#ffffff;font-weight:bold;font-family:'Liberation Sans', sans-serif;white-space:nowrap;">Column3</div>
<div style="position:absolute;left:627px;top:803px;width:25px;height:25px;background:#f0f0f0;box-shadow:inset 1px 1px 0 #fbfbfb"></div>
<svg style="position:absolute;left:627px;top:803px" width="25" height="25" viewBox="627 803 25 25"><path d="M634.0 811.7 H645.0 L639.5 818.7 Z" fill="#6b6b6b"/></svg>
<div style="position:absolute;left:657px;top:809.18px;font-size:17.5px;line-height:17.5px;color:#ffffff;font-weight:bold;font-family:'Liberation Sans', sans-serif;white-space:nowrap;">Column4</div>
<div style="position:absolute;left:763px;top:803px;width:25px;height:25px;background:#f0f0f0;box-shadow:inset 1px 1px 0 #fbfbfb"></div>
<svg style="position:absolute;left:763px;top:803px" width="25" height="25" viewBox="763 803 25 25"><path d="M770.0 811.7 H781.0 L775.5 818.7 Z" fill="#6b6b6b"/></svg>
<div style="position:absolute;left:793px;top:809.18px;font-size:17.5px;line-height:17.5px;color:#ffffff;font-weight:bold;font-family:'Liberation Sans', sans-serif;white-space:nowrap;">Column5</div>
<div style="position:absolute;left:910px;top:803px;width:25px;height:25px;background:#f0f0f0;box-shadow:inset 1px 1px 0 #fbfbfb"></div>
<svg style="position:absolute;left:910px;top:803px" width="25" height="25" viewBox="910 803 25 25"><path d="M917.0 811.7 H928.0 L922.5 818.7 Z" fill="#6b6b6b"/></svg>
<div style="position:absolute;left:940px;top:809.18px;font-size:17.5px;line-height:17.5px;color:#ffffff;font-weight:bold;font-family:'Liberation Sans', sans-serif;white-space:nowrap;">Column6</div>
<div style="position:absolute;left:1048px;top:803px;width:25px;height:25px;background:#f0f0f0;box-shadow:inset 1px 1px 0 #fbfbfb"></div>
<svg style="position:absolute;left:1048px;top:803px" width="25" height="25" viewBox="1048 803 25 25"><path d="M1055.0 811.7 H1066.0 L1060.5 818.7 Z" fill="#6b6b6b"/></svg>
<div style="position:absolute;left:1078px;top:809.18px;font-size:17.5px;line-height:17.5px;color:#ffffff;font-weight:bold;font-family:'Liberation Sans', sans-serif;white-space:nowrap;">Column7</div>
<div style="position:absolute;left:1179px;top:803px;width:25px;height:25px;background:#f0f0f0;box-shadow:inset 1px 1px 0 #fbfbfb"></div>
<svg style="position:absolute;left:1179px;top:803px" width="25" height="25" viewBox="1179 803 25 25"><path d="M1186.0 811.7 H1197.0 L1191.5 818.7 Z" fill="#6b6b6b"/></svg>
<div style="position:absolute;left:198px;top:837.18px;font-size:17.5px;line-height:17.5px;color:#000;font-weight:normal;font-family:'Liberation Sans', sans-serif;white-space:nowrap;letter-spacing:0.34px;">operación</div>
<div style="position:absolute;left:344px;top:837.18px;font-size:17.5px;line-height:17.5px;color:#000;font-weight:normal;font-family:'Liberation Sans', sans-serif;white-space:nowrap;letter-spacing:0.15px;">Num3 y Num4</div>
<div style="position:absolute;left:500px;top:837.18px;font-size:17.5px;line-height:17.5px;color:#000;font-weight:normal;font-family:'Liberation Sans', sans-serif;white-space:nowrap;letter-spacing:0.15px;">Num2 y Num4</div>
<div style="position:absolute;left:657px;top:837.18px;font-size:17.5px;line-height:17.5px;color:#000;font-weight:normal;font-family:'Liberation Sans', sans-serif;white-space:nowrap;letter-spacing:0.15px;">Num1 y Num3</div>
<div style="position:absolute;left:793px;top:837.18px;font-size:17.5px;line-height:17.5px;color:#000;font-weight:normal;font-family:'Liberation Sans', sans-serif;white-space:nowrap;letter-spacing:0.15px;">Num1 y Num4</div>
<div style="position:absolute;left:940px;top:837.18px;font-size:17.5px;line-height:17.5px;color:#000;font-weight:normal;font-family:'Liberation Sans', sans-serif;white-space:nowrap;letter-spacing:0.15px;">Num2 y Num1</div>
<div style="position:absolute;left:1078px;top:837.18px;font-size:17.5px;line-height:17.5px;color:#000;font-weight:normal;font-family:'Liberation Sans', sans-serif;white-space:nowrap;letter-spacing:0.15px;">Num3 y Num2</div>
<div style="position:absolute;left:198px;top:865.18px;font-size:17.5px;line-height:17.5px;color:#000;font-weight:normal;font-family:'Liberation Sans', sans-serif;white-space:nowrap;">Suma(+)</div>
<div style="position:absolute;right:1426.2px;text-align:right;top:865.18px;font-size:17.5px;line-height:17.5px;color:#000;font-weight:normal;font-family:'Liberation Sans', sans-serif;white-space:nowrap;letter-spacing:0.4px;">23</div>
<div style="position:absolute;right:1269.2px;text-align:right;top:865.18px;font-size:17.5px;line-height:17.5px;color:#000;font-weight:normal;font-family:'Liberation Sans', sans-serif;white-space:nowrap;letter-spacing:0.4px;">20</div>
<div style="position:absolute;right:1133.2px;text-align:right;top:865.18px;font-size:17.5px;line-height:17.5px;color:#000;font-weight:normal;font-family:'Liberation Sans', sans-serif;white-space:nowrap;letter-spacing:0.4px;">17</div>
<div style="position:absolute;right:986.2px;text-align:right;top:865.18px;font-size:17.5px;line-height:17.5px;color:#000;font-weight:normal;font-family:'Liberation Sans', sans-serif;white-space:nowrap;letter-spacing:0.4px;">30</div>
<div style="position:absolute;right:848.1999999999998px;text-align:right;top:865.18px;font-size:17.5px;line-height:17.5px;color:#000;font-weight:normal;font-family:'Liberation Sans', sans-serif;white-space:nowrap;letter-spacing:0.4px;">14</div>
<div style="position:absolute;right:717.1999999999998px;text-align:right;top:865.18px;font-size:17.5px;line-height:17.5px;color:#000;font-weight:normal;font-family:'Liberation Sans', sans-serif;white-space:nowrap;letter-spacing:0.4px;">7</div>
<div style="position:absolute;left:198px;top:893.18px;font-size:17.5px;line-height:17.5px;color:#000;font-weight:normal;font-family:'Liberation Sans', sans-serif;white-space:nowrap;">Resta(-)</div>
<div style="position:absolute;right:1426.2px;text-align:right;top:893.18px;font-size:17.5px;line-height:17.5px;color:#000;font-weight:normal;font-family:'Liberation Sans', sans-serif;white-space:nowrap;letter-spacing:0.4px;">-13</div>
<div style="position:absolute;right:1269.2px;text-align:right;top:893.18px;font-size:17.5px;line-height:17.5px;color:#000;font-weight:normal;font-family:'Liberation Sans', sans-serif;white-space:nowrap;letter-spacing:0.4px;">-16</div>
<div style="position:absolute;right:1133.2px;text-align:right;top:893.18px;font-size:17.5px;line-height:17.5px;color:#000;font-weight:normal;font-family:'Liberation Sans', sans-serif;white-space:nowrap;letter-spacing:0.4px;">7</div>
<div style="position:absolute;right:986.2px;text-align:right;top:893.18px;font-size:17.5px;line-height:17.5px;color:#000;font-weight:normal;font-family:'Liberation Sans', sans-serif;white-space:nowrap;letter-spacing:0.4px;">-6</div>
<div style="position:absolute;right:848.1999999999998px;text-align:right;top:893.18px;font-size:17.5px;line-height:17.5px;color:#000;font-weight:normal;font-family:'Liberation Sans', sans-serif;white-space:nowrap;letter-spacing:0.4px;">-10</div>
<div style="position:absolute;right:717.1999999999998px;text-align:right;top:893.18px;font-size:17.5px;line-height:17.5px;color:#000;font-weight:normal;font-family:'Liberation Sans', sans-serif;white-space:nowrap;letter-spacing:0.4px;">3</div>
<div style="position:absolute;left:198px;top:921.18px;font-size:17.5px;line-height:17.5px;color:#000;font-weight:normal;font-family:'Liberation Sans', sans-serif;white-space:nowrap;letter-spacing:0.62px;">Multiplicación (*)</div>
<div style="position:absolute;right:1426.2px;text-align:right;top:921.18px;font-size:17.5px;line-height:17.5px;color:#000;font-weight:normal;font-family:'Liberation Sans', sans-serif;white-space:nowrap;letter-spacing:0.4px;">90</div>
<div style="position:absolute;right:1269.2px;text-align:right;top:921.18px;font-size:17.5px;line-height:17.5px;color:#000;font-weight:normal;font-family:'Liberation Sans', sans-serif;white-space:nowrap;letter-spacing:0.4px;">36</div>
<div style="position:absolute;right:1133.2px;text-align:right;top:921.18px;font-size:17.5px;line-height:17.5px;color:#000;font-weight:normal;font-family:'Liberation Sans', sans-serif;white-space:nowrap;letter-spacing:0.4px;">60</div>
<div style="position:absolute;right:986.2px;text-align:right;top:921.18px;font-size:17.5px;line-height:17.5px;color:#000;font-weight:normal;font-family:'Liberation Sans', sans-serif;white-space:nowrap;letter-spacing:0.4px;">216</div>
<div style="position:absolute;right:848.1999999999998px;text-align:right;top:921.18px;font-size:17.5px;line-height:17.5px;color:#000;font-weight:normal;font-family:'Liberation Sans', sans-serif;white-space:nowrap;letter-spacing:0.4px;">24</div>
<div style="position:absolute;right:717.1999999999998px;text-align:right;top:921.18px;font-size:17.5px;line-height:17.5px;color:#000;font-weight:normal;font-family:'Liberation Sans', sans-serif;white-space:nowrap;letter-spacing:0.4px;">10</div>
<div style="position:absolute;left:198px;top:949.18px;font-size:17.5px;line-height:17.5px;color:#000;font-weight:normal;font-family:'Liberation Sans', sans-serif;white-space:nowrap;letter-spacing:0.22px;">División (/)</div>
<div style="position:absolute;right:1426.2px;text-align:right;top:949.18px;font-size:17.5px;line-height:17.5px;color:#000;font-weight:normal;font-family:'Liberation Sans', sans-serif;white-space:nowrap;letter-spacing:0.4px;">0.277777778</div>
<div style="position:absolute;right:1269.2px;text-align:right;top:949.18px;font-size:17.5px;line-height:17.5px;color:#000;font-weight:normal;font-family:'Liberation Sans', sans-serif;white-space:nowrap;letter-spacing:0.4px;">0.111111111</div>
<div style="position:absolute;right:1133.2px;text-align:right;top:949.18px;font-size:17.5px;line-height:17.5px;color:#000;font-weight:normal;font-family:'Liberation Sans', sans-serif;white-space:nowrap;letter-spacing:0.4px;">2.4</div>
<div style="position:absolute;right:986.2px;text-align:right;top:949.18px;font-size:17.5px;line-height:17.5px;color:#000;font-weight:normal;font-family:'Liberation Sans', sans-serif;white-space:nowrap;letter-spacing:0.4px;">0.666666667</div>
<div style="position:absolute;right:848.1999999999998px;text-align:right;top:949.18px;font-size:17.5px;line-height:17.5px;color:#000;font-weight:normal;font-family:'Liberation Sans', sans-serif;white-space:nowrap;letter-spacing:0.4px;">0.166666667</div>
<div style="position:absolute;right:717.1999999999998px;text-align:right;top:949.18px;font-size:17.5px;line-height:17.5px;color:#000;font-weight:normal;font-family:'Liberation Sans', sans-serif;white-space:nowrap;letter-spacing:0.4px;">2.5</div>
<div style="position:absolute;left:198px;top:977.18px;font-size:17.5px;line-height:17.5px;color:#000;font-weight:normal;font-family:'Liberation Sans', sans-serif;white-space:nowrap;letter-spacing:0.29px;">Potencia (^)</div>
<div style="position:absolute;right:1426.2px;text-align:right;top:977.18px;font-size:17.5px;line-height:17.5px;color:#000;font-weight:normal;font-family:'Liberation Sans', sans-serif;white-space:nowrap;letter-spacing:0.4px;">3.8147E+12</div>
<div style="position:absolute;right:1269.2px;text-align:right;top:977.18px;font-size:17.5px;line-height:17.5px;color:#000;font-weight:normal;font-family:'Liberation Sans', sans-serif;white-space:nowrap;letter-spacing:0.4px;">262144</div>
<div style="position:absolute;right:1133.2px;text-align:right;top:977.18px;font-size:17.5px;line-height:17.5px;color:#000;font-weight:normal;font-family:'Liberation Sans', sans-serif;white-space:nowrap;letter-spacing:0.4px;">248832</div>
<div style="position:absolute;right:986.2px;text-align:right;top:977.18px;font-size:17.5px;line-height:17.5px;color:#000;font-weight:normal;font-family:'Liberation Sans', sans-serif;white-space:nowrap;letter-spacing:0.4px;">2.66233E+19</div>
<div style="position:absolute;right:848.1999999999998px;text-align:right;top:977.18px;font-size:17.5px;line-height:17.5px;color:#000;font-weight:normal;font-family:'Liberation Sans', sans-serif;white-space:nowrap;letter-spacing:0.4px;">4096</div>
<div style="position:absolute;right:717.1999999999998px;text-align:right;top:977.18px;font-size:17.5px;line-height:17.5px;color:#000;font-weight:normal;font-family:'Liberation Sans', sans-serif;white-space:nowrap;letter-spacing:0.4px;">25</div>
<svg style="position:absolute;left:915px;top:475px" width="180" height="65" viewBox="915 475 180 65"><circle cx="935.5" cy="492.5" r="10.6" fill="#fff"/><circle cx="1074.5" cy="521.5" r="10.6" fill="#fff"/><rect x="965" y="517.5" width="83" height="8" fill="#fff"/><path d="M946 492.5 H1074.5 V511" fill="none" stroke="#217346" stroke-width="3"/><path d="M935.5 503 V521.5 H966" fill="none" stroke="#217346" stroke-width="3"/><path d="M1047 521.5 H1064" fill="none" stroke="#217346" stroke-width="3"/><rect x="968" y="518.8" width="77" height="5.6" rx="2.8" fill="#217346"/><circle cx="935.5" cy="492.5" r="7.6" fill="#217346"/><circle cx="1074.5" cy="521.5" r="7.6" fill="#217346"/></svg>
<div style="position:absolute;left:0px;top:1065px;width:1920px;height:63px;background:#f3f3f3;"></div>
<div style="position:absolute;left:0px;top:1065px;width:1920px;height:4px;background:#e3e3e3;"></div>
<div style="position:absolute;left:76px;top:1067px;width:162px;height:61px;background:#ffffff;"></div>
<div style="position:absolute;left:74px;top:1067px;width:2px;height:61px;background:#e3e3e3;"></div>
<div style="position:absolute;left:238px;top:1067px;width:2px;height:61px;background:#e3e3e3;"></div>
<svg style="position:absolute;left:20px;top:1075px" width="40" height="40" viewBox="20 1075 40 40"><path d="M27 1093 H47 M37 1083 V1103" stroke="#4a4a4a" stroke-width="3.4"/></svg>
<div style="position:absolute;left:-444px;width:1200px;text-align:center;top:1086.23px;font-size:23px;line-height:23px;color:#222;font-weight:normal;font-family:'Liberation Sans', sans-serif;white-space:nowrap;letter-spacing:-0.3px;">Sheet1</div>
<div style="position:absolute;left:0px;top:1128px;width:1920px;height:72px;background:#f4f4f4;"></div>
<svg style="position:absolute;left:100px;top:1135px" width="60" height="45" viewBox="100 1135 60 45"><circle cx="118" cy="1147" r="2.4" fill="#666"/><circle cx="118" cy="1157" r="2.4" fill="#666"/><circle cx="118" cy="1167" r="2.4" fill="#666"/><circle cx="130" cy="1147" r="2.4" fill="#666"/><circle cx="130" cy="1157" r="2.4" fill="#666"/><circle cx="130" cy="1167" r="2.4" fill="#666"/><circle cx="142" cy="1147" r="2.4" fill="#666"/><circle cx="142" cy="1157" r="2.4" fill="#666"/><circle cx="142" cy="1167" r="2.4" fill="#666"/></svg>
<svg style="position:absolute;left:800px;top:1128px" width="320" height="72" viewBox="800 1128 320 72"><path d="M835.5 1154.2 C835.5 1134.88 837.18 1133.2 856.5 1133.2 C875.82 1133.2 877.5 1134.88 877.5 1154.2 C877.5 1173.52 875.82 1175.2 856.5 1175.2 C837.18 1175.2 835.5 1173.52 835.5 1154.2 Z" fill="#45260f"/><path d="M908.7 1154.2 C908.7 1134.88 910.38 1133.2 929.7 1133.2 C949.0200000000001 1133.2 950.7 1134.88 950.7 1154.2 C950.7 1173.52 949.0200000000001 1175.2 929.7 1175.2 C910.38 1175.2 908.7 1173.52 908.7 1154.2 Z" fill="#45260f"/><path d="M981.5 1154.2 C981.5 1134.88 983.18 1133.2 1002.5 1133.2 C1021.82 1133.2 1023.5 1134.88 1023.5 1154.2 C1023.5 1173.52 1021.82 1175.2 1002.5 1175.2 C983.18 1175.2 981.5 1173.52 981.5 1154.2 Z" fill="#45260f"/><path d="M1054.6 1154.2 C1054.6 1134.88 1056.28 1133.2 1075.6 1133.2 C1094.9199999999998 1133.2 1096.6 1134.88 1096.6 1154.2 C1096.6 1173.52 1094.9199999999998 1175.2 1075.6 1175.2 C1056.28 1175.2 1054.6 1173.52 1054.6 1154.2 Z" fill="#45260f"/><ellipse cx="864.80" cy="1154.20" rx="4.7" ry="3.2" transform="rotate(0 864.80 1154.20)" fill="#fadcc7"/><ellipse cx="862.37" cy="1160.07" rx="4.7" ry="3.2" transform="rotate(45 862.37 1160.07)" fill="#fadcc7"/><ellipse cx="856.50" cy="1162.50" rx="4.7" ry="3.2" transform="rotate(90 856.50 1162.50)" fill="#fadcc7"/><ellipse cx="850.63" cy="1160.07" rx="4.7" ry="3.2" transform="rotate(135 850.63 1160.07)" fill="#fadcc7"/><ellipse cx="848.20" cy="1154.20" rx="4.7" ry="3.2" transform="rotate(180 848.20 1154.20)" fill="#fadcc7"/><ellipse cx="850.63" cy="1148.33" rx="4.7" ry="3.2" transform="rotate(225 850.63 1148.33)" fill="#fadcc7"/><ellipse cx="856.50" cy="1145.90" rx="4.7" ry="3.2" transform="rotate(270 856.50 1145.90)" fill="#fadcc7"/><ellipse cx="862.37" cy="1148.33" rx="4.7" ry="3.2" transform="rotate(315 862.37 1148.33)" fill="#fadcc7"/><circle cx="856.5" cy="1154.2" r="4.4" fill="#fadcc7"/><circle cx="856.5" cy="1154.2" r="2.3" fill="#45260f"/><circle cx="929.7" cy="1154.2" r="12.8" fill="#fadcc7"/><circle cx="929.7" cy="1154.2" r="6.6" fill="#45260f"/><circle cx="929.7" cy="1154.2" r="4.6" fill="#fadcc7"/><path d="M920.7 1144.2 L925.3000000000001 1151.6000000000001 M936.3000000000001 1152.4 H942.7 M931.5 1160.6000000000001 L926.9000000000001 1167.4" stroke="#45260f" stroke-width="1.8"/><rect x="989.1" y="1144.4" width="26.6" height="20" rx="3.2" fill="#fadcc7"/><circle cx="1001.9" cy="1154.4" r="5.2" fill="#45260f"/><circle cx="1010.7" cy="1148.6000000000001" r="2.1" fill="#45260f"/><path d="M1063.9 1147.6 H1073.6 M1068.75 1142.8 V1152.4 M1078 1147.4 H1087.2" stroke="#fadcc7" stroke-width="2.4"/><path d="M1065.7 1157.9 L1072.7 1164.9 M1072.7 1157.9 L1065.7 1164.9" stroke="#fadcc7" stroke-width="2.3"/><path d="M1077.1 1161.3 H1087.7" stroke="#fadcc7" stroke-width="2.1"/><circle cx="1082.4" cy="1157.4" r="1.35" fill="#fadcc7"/><circle cx="1082.4" cy="1165.1" r="1.35" fill="#fadcc7"/><rect x="809" y="1186" width="302" height="4.8" rx="2.4" fill="#a9a9a9"/></svg>
</div></body></html>
